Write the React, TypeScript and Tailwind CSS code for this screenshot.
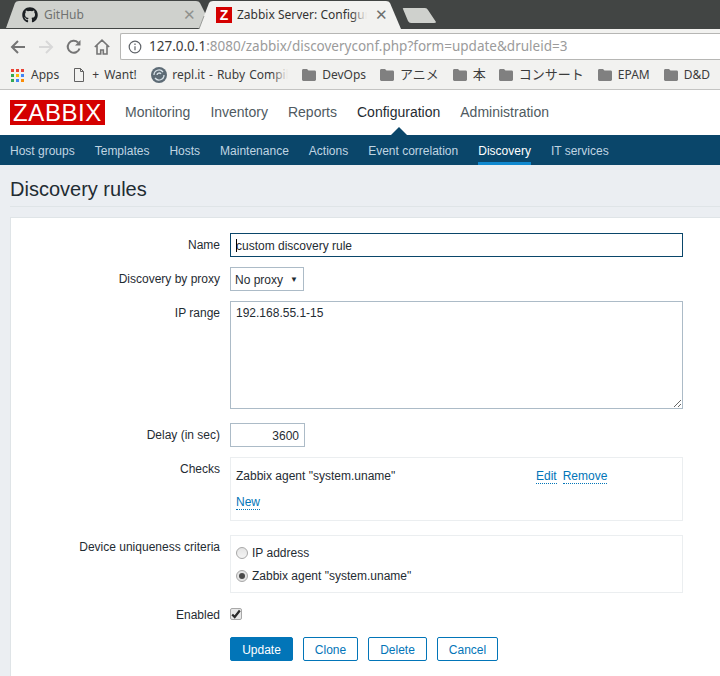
import React from "react";
import { FaGithub } from "react-icons/fa";

const Folder = () => (
  <svg width="14" height="12" viewBox="0 0 14 12" className="shrink-0">
    <path d="M0 1.5C0 .7.6 0 1.3 0H5l1.5 1.6h6.2c.7 0 1.3.6 1.3 1.3v7.7c0 .8-.6 1.4-1.3 1.4H1.3C.6 12 0 11.4 0 10.6z" fill="#808080" />
  </svg>
);

const Bookmark = ({ label, className = "ml-[14px]" }: { label: string; className?: string }) => (
  <div className={`flex items-center gap-[6px] ${className}`}>
    <Folder />
    <span>{label}</span>
  </div>
);

const Row = ({ label, children, className = "", labelPad = "pt-[5px]" }: { label: string; children: React.ReactNode; className?: string; labelPad?: string }) => (
  <div className={`flex ${className}`}>
    <div className={`w-[209px] shrink-0 text-right leading-[14px] text-[#1f2c33] ${labelPad}`}>{label}</div>
    <div className="ml-[10px] min-w-0">{children}</div>
  </div>
);

const DotLink = ({ children, className = "" }: { children: React.ReactNode; className?: string }) => (
  <span className={`border-b border-dotted border-[#0275b8] leading-[14px] text-[#0275b8] ${className}`}>{children}</span>
);

const Btn = ({ children, primary = false, w }: { children: React.ReactNode; primary?: boolean; w: string }) => (
  <div className={`flex h-[24px] items-center justify-center rounded-[2px] border border-[#0275b8] pt-px ${w} ${primary ? "bg-[#0275b8] text-white" : "bg-white text-[#0275b8]"}`}>
    {children}
  </div>
);

export default function App() {
  return (
    <div className="h-[676px] w-[720px] overflow-hidden bg-[#ebeef2] font-['Liberation_Sans',sans-serif] text-[12px] text-[#1f2c33]">
      {/* Browser tab strip */}
      <div className="relative h-[29px] bg-[#424544] font-['Noto_Sans',sans-serif] text-[12px]">
        <svg width="440" height="29" className="absolute left-0 top-0">
          <path d="M6 28 L15 3 Q16 1 19 1 H196 Q199 1 200 3 L206 15 L201 28 Z" fill="#cfd1cd" />
          <path d="M199 29 L209 3 Q210 1 213 1 H386 Q389 1 390 3 L401 29 Z" fill="#f2f2f0" />
          <path d="M403 9 Q402 8 404 8 H425 Q427 8 428 10 L436 22 Q436 23 434 23 H411 Q409 23 408 21 Z" fill="#cfd1cd" />
          <path d="M199 29 L204 16" stroke="#9a9c99" fill="none" />
        </svg>
        <div className="relative flex h-full items-center pl-[22px]">
          <FaGithub className="h-[16px] w-[16px] text-[#1b1f23]" />
          <span className="ml-[6px] w-[139px] text-[#6f7170]">GitHub</span>
          <span className="text-[15px] leading-none text-[#8f918f]">✕</span>
          <div className="ml-[20px] flex h-[16px] w-[16px] items-center justify-center bg-[#d40000] font-['Liberation_Sans',sans-serif] text-[14px] font-bold leading-none text-white">Z</div>
          <div className="relative ml-[5px] w-[130px] overflow-hidden whitespace-nowrap text-[#333]">
            Zabbix Server: Configuration
            <div className="absolute right-0 top-0 h-full w-[16px] bg-gradient-to-r from-transparent to-[#f2f2f0]" />
          </div>
          <span className="ml-[8px] text-[15px] leading-none text-[#6d6f6e]">✕</span>
        </div>
      </div>

      {/* Toolbar */}
      <div className="flex h-[32px] items-center bg-[#f2f2f0] pl-[10px] pt-[3px]">
        <svg width="16" height="16" viewBox="0 0 16 16" fill="none" stroke="#757575" strokeWidth="2">
          <path d="M15 8H2M8 2 2 8l6 6" />
        </svg>
        <svg width="16" height="16" viewBox="0 0 16 16" fill="none" stroke="#d8d8d8" strokeWidth="2" className="ml-[12px]">
          <path d="M1 8h13M8 2l6 6-6 6" />
        </svg>
        <svg width="16" height="16" viewBox="0 0 16 16" fill="none" stroke="#757575" strokeWidth="2" className="ml-[12px]">
          <path d="M13.5 9.5A6 6 0 1 1 12 3.5" />
          <path d="M14.5 1v5.5H9z" fill="#757575" stroke="none" />
        </svg>
        <svg width="16" height="16" viewBox="0 0 16 16" fill="none" stroke="#757575" strokeWidth="1.6" className="ml-[12px]">
          <path d="M.8 8 8 1.2 15.2 8M3 6.5V15h3.7v-4h2.6v4H13V6.5" />
        </svg>
        <div className="ml-[10px] flex h-[27px] flex-1 items-center rounded-l-[2px] border border-r-0 border-[#b6b6b4] bg-white pl-[7px]">
          <svg width="14" height="14" viewBox="0 0 14 14" fill="none" stroke="#5f6368" strokeWidth="1.2">
            <circle cx="7" cy="7" r="5.8" />
            <path d="M7 6.2v4M7 3.5v1.4" />
          </svg>
          <span className="ml-[7px] whitespace-nowrap font-['Noto_Sans',sans-serif] text-[13.5px] text-[#3c3c3c]">
            127.0.0.1<span className="text-[#9b9b9b]">:8080/zabbix/discoveryconf.php?form=update&amp;druleid=3</span>
          </span>
        </div>
      </div>

      {/* Bookmarks */}
      <div className="flex h-[29px] items-center whitespace-nowrap border-b border-[#c4c4c2] bg-[#f2f2f0] pl-[11px] font-['Noto_Sans','Noto_Sans_CJK_JP',sans-serif] text-[12px] text-[#3c3c3c]">
        <div className="grid h-[13px] w-[13px] grid-cols-3 gap-[2px]">
          {["#ea4335", "#ea4335", "#ea4335", "#34a853", "#fbbc05", "#4285f4", "#34a853", "#4285f4", "#fb8c05"].map((c, i) => (
            <div key={i} style={{ backgroundColor: c }} />
          ))}
        </div>
        <span className="ml-[7px]">Apps</span>
        <svg width="12" height="14" viewBox="0 0 12 14" fill="none" stroke="#616161" className="ml-[14px]">
          <path d="M1.5.5h6l3 3v10h-9zM7.5.5v3h3" />
        </svg>
        <span className="ml-[7px] w-[47px] [word-spacing:2px]">+ Want!</span>
        <svg width="16" height="16" viewBox="0 0 16 16" fill="none" className="ml-[12px]">
          <circle cx="8" cy="8" r="8" fill="#5d6b75" />
          <path d="M3 8a5 5 0 0 1 9-3M13 8a5 5 0 0 1-9 3M6 8a2.2 2.2 0 0 1 4-1" stroke="#d8e2e8" strokeWidth="1.3" />
        </svg>
        <div className="relative ml-[5px] w-[116px] overflow-hidden [word-spacing:1px]">
          repl.it - Ruby Compiler
          <div className="absolute right-0 top-0 h-full w-[16px] bg-gradient-to-r from-transparent to-[#f2f2f0]" />
        </div>
        <Bookmark label="DevOps" />
        <Bookmark label="アニメ" className="ml-[14px] text-[13px]" />
        <Bookmark label="本" className="ml-[14px] text-[13px]" />
        <Bookmark label="コンサート" className="ml-[13px] text-[13px]" />
        <Bookmark label="EPAM" />
        <Bookmark label="D&D" />
      </div>

      {/* Zabbix header */}
      <div className="relative flex h-[45px] items-center bg-white pl-[10px] text-[14px] text-[#4f5a61]">
        <div className="flex h-[25px] w-[95px] items-center justify-center bg-[#d40000] text-[24px] leading-none tracking-[0.6px] text-white">ZABBIX</div>
        <span className="ml-[20px]">Monitoring</span>
        <span className="ml-[20px]">Inventory</span>
        <span className="ml-[20px]">Reports</span>
        <span className="ml-[20px] text-[#1f2c33]">Configuration</span>
        <span className="ml-[20px]">Administration</span>
        <div className="absolute bottom-0 left-[391px] h-0 w-0 border-x-[8px] border-b-[8px] border-x-transparent border-b-[#0a466a]" />
      </div>
      <div className="flex h-[30px] items-stretch gap-[20px] bg-[#0a466a] pl-[10px] text-[#c0d5e2]">
        {["Host groups", "Templates", "Hosts", "Maintenance", "Actions", "Event correlation"].map((t) => (
          <span key={t} className="pt-[7px]">{t}</span>
        ))}
        <span className="border-b-[3px] border-[#0f88cf] pt-[7px] text-white">Discovery</span>
        <span className="pt-[7px]">IT services</span>
      </div>

      {/* Title */}
      <div className="ml-[10px] h-[42px] border-b border-[#dfe4e7] pt-[12px] text-[20px] leading-[24px] text-[#1f2c33]">Discovery rules</div>

      {/* Form panel */}
      <div className="ml-[10px] mt-[10px] h-[470px] border-l border-t border-[#dfe4e7] bg-white pt-[15px]">
        <Row label="Name">
          <div className="relative flex h-[24px] w-[453px] items-center border border-[#0a466a] pl-[5px] pt-px">
            <span className="absolute left-[5px] top-[5px] h-[13px] w-px bg-black" />
            custom discovery rule
          </div>
        </Row>
        <Row label="Discovery by proxy" className="mt-[10px]">
          <div className="flex h-[24px] w-[74px] items-center justify-between border border-[#acbbc7] pl-[4px] pr-[5px] pt-px">
            No proxy
            <span className="text-[8px] leading-none">▼</span>
          </div>
        </Row>
        <Row label="IP range" className="mt-[10px]">
          <textarea readOnly defaultValue="192.168.55.1-15" className="block h-[108px] w-[453px] border border-[#acbbc7] px-[5px] py-[4px] leading-[14px] outline-none" />
        </Row>
        <Row label="Delay (in sec)" className="mt-[14px]">
          <div className="flex h-[24px] w-[75px] items-center justify-end border border-[#acbbc7] pr-[5px] pt-px">3600</div>
        </Row>
        <Row label="Checks" className="mt-[10px]">
          <div className="h-[64px] w-[453px] border border-[#ebeef0] px-[5px] pt-[11px]">
            <div className="flex h-[16px] items-start leading-[14px]">
              <span className="w-[300px]">Zabbix agent "system.uname"</span>
              <DotLink>Edit</DotLink>
              <DotLink className="ml-[6px]">Remove</DotLink>
            </div>
            <div className="mt-[10px] flex">
              <DotLink>New</DotLink>
            </div>
          </div>
        </Row>
        <Row label="Device uniqueness criteria" className="mt-[14px]">
          <div className="h-[58px] w-[453px] border border-[#ebeef0] px-[5px] pt-[10px] leading-[14px]">
            <div className="flex items-center gap-[4px]">
              <span className="h-[12px] w-[12px] rounded-full border border-[#a8a8a8] bg-gradient-to-b from-[#e4e4e4] to-[#f4f4f4]" />
              IP address
            </div>
            <div className="mt-[9px] flex items-center gap-[4px]">
              <span className="flex h-[12px] w-[12px] items-center justify-center rounded-full border border-[#a8a8a8] bg-[#e4e4e4]">
                <span className="h-[6px] w-[6px] rounded-full bg-[#4a4a4a]" />
              </span>
              Zabbix agent "system.uname"
            </div>
          </div>
        </Row>
        <Row label="Enabled" className="mt-[13px]" labelPad="pt-[2px]">
          <div className="mt-[2px] flex h-[12px] w-[12px] items-center justify-center rounded-[2px] border border-[#a8a8a8] bg-[#e8e8e8]">
            <svg width="10" height="10" viewBox="0 0 10 10" fill="none" stroke="#2b2b2b" strokeWidth="2.2">
              <path d="M1.2 5.4 3.7 8 8.8 1.5" />
            </svg>
          </div>
        </Row>
        <div className="ml-[219px] mt-[15px] flex gap-[10px]">
          <Btn primary w="w-[63px]">Update</Btn>
          <Btn w="w-[55px]">Clone</Btn>
          <Btn w="w-[59px]">Delete</Btn>
          <Btn w="w-[61px]">Cancel</Btn>
        </div>
      </div>
    </div>
  );
}
